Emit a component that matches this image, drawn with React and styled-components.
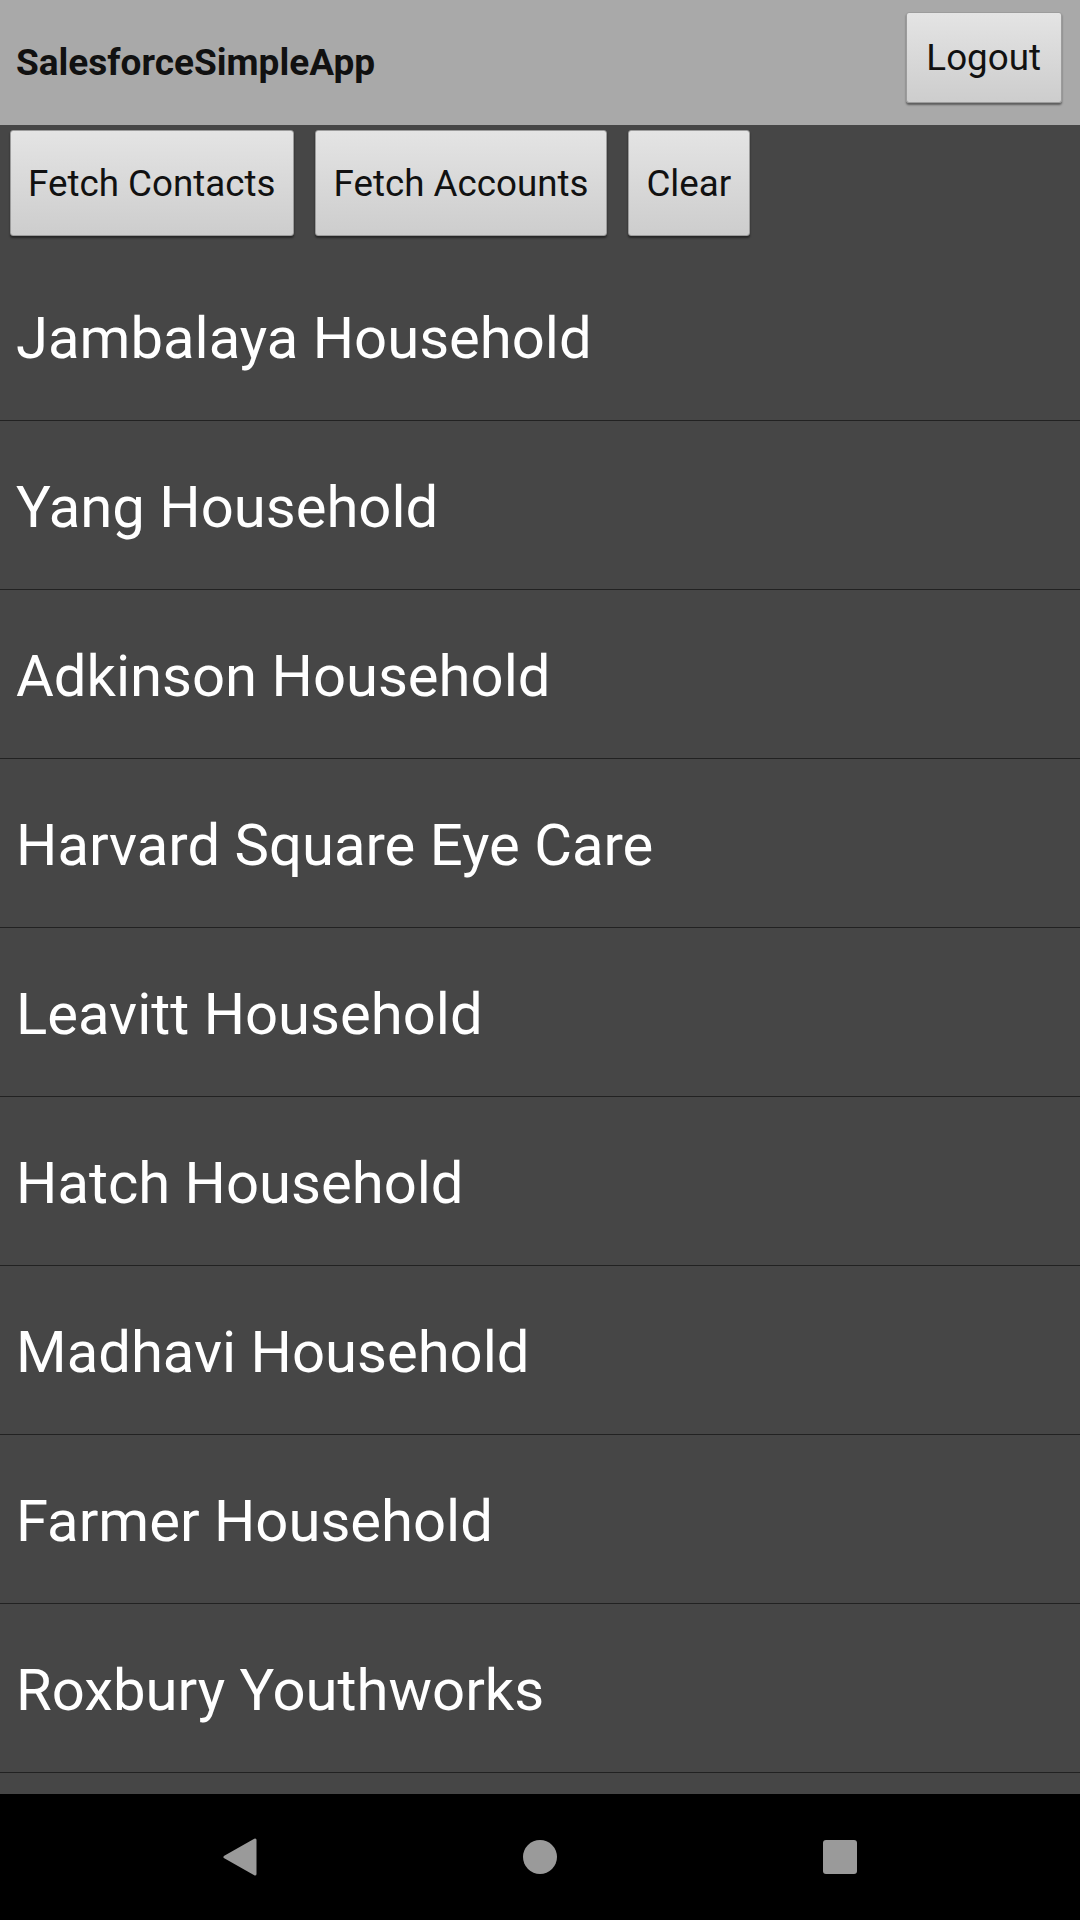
import React from "react"
import styled, { createGlobalStyle } from "styled-components"

const GlobalStyle = createGlobalStyle`
  html, body {
    margin: 0;
    padding: 0;
    background: #464646;
  }
  * {
    box-sizing: border-box;
  }
`

const Screen = styled.div`
  width: 1080px;
  height: 1920px;
  display: flex;
  flex-direction: column;
  background: #464646;
  font-family: Roboto, "Noto Sans", sans-serif;
  overflow: hidden;
`

const Header = styled.header`
  height: 125px;
  flex-shrink: 0;
  display: flex;
  align-items: center;
  justify-content: space-between;
  padding: 0 18px 0 16px;
  background: #a9a9a9;
`

const Title = styled.h1`
  margin: 0;
  font-size: 37px;
  font-weight: 700;
  color: #111;
`

const Button = styled.button`
  height: ${(p) => p.h || 106}px;
  padding: 0 ${(p) => p.pr || 18}px 0 ${(p) => p.pl || 17}px;
  font-family: Roboto, "Noto Sans", sans-serif;
  font-size: 36.75px;
  color: #111;
  background: linear-gradient(#e4e4e4, #cdcdcd);
  border: 1px solid #9c9c9c;
  border-radius: 3px;
  box-shadow: 0 2px 2px rgba(0, 0, 0, 0.45);
  cursor: pointer;
  white-space: nowrap;
`

const LogoutButton = styled(Button)`
  align-self: flex-start;
  margin-top: 12px;
`

const ButtonRow = styled.div`
  display: flex;
  gap: 21px;
  padding: 5px 0 16px 10px;
  flex-shrink: 0;
`

const List = styled.ul`
  flex: 1;
  margin: 0;
  padding: 0;
  list-style: none;
  overflow: hidden;
`

const Row = styled.li`
  height: 169px;
  flex-shrink: 0;
  display: flex;
  align-items: center;
  padding: 4px 0 0 16px;
  border-bottom: 1px solid #222;
  color: #fff;
  font-size: 58px;
`

const NavBar = styled.nav`
  height: 126px;
  flex-shrink: 0;
  display: flex;
  justify-content: center;
  align-items: center;
  background: #000;
`

const NavSlot = styled.div`
  width: 300px;
  display: flex;
  justify-content: center;
  align-items: center;
`

const accounts = [
  "Jambalaya Household",
  "Yang Household",
  "Adkinson Household",
  "Harvard Square Eye Care",
  "Leavitt Household",
  "Hatch Household",
  "Madhavi Household",
  "Farmer Household",
  "Roxbury Youthworks",
  "",
]

export default function App() {
  return (
    <Screen>
      <GlobalStyle />
      <Header>
        <Title>SalesforceSimpleApp</Title>
        <LogoutButton h={91} pl={19} pr={20}>Logout</LogoutButton>
      </Header>
      <ButtonRow>
        <Button>Fetch Contacts</Button>
        <Button>Fetch Accounts</Button>
        <Button>Clear</Button>
      </ButtonRow>
      <List>
        {accounts.map((name, i) => (
          <Row key={i}>{name}</Row>
        ))}
      </List>
      <NavBar>
        <NavSlot>
          <svg width="40" height="40" viewBox="0 0 40 40">
            <path
              d="M35 3 L35 37 L5 20 Z"
              fill="#9a9a9a"
              stroke="#9a9a9a"
              strokeWidth="3"
              strokeLinejoin="round"
            />
          </svg>
        </NavSlot>
        <NavSlot>
          <svg width="36" height="36" viewBox="0 0 36 36">
            <circle cx="18" cy="18" r="17" fill="#9a9a9a" />
          </svg>
        </NavSlot>
        <NavSlot>
          <svg width="36" height="36" viewBox="0 0 36 36">
            <rect x="1" y="1" width="34" height="34" rx="3" fill="#9a9a9a" />
          </svg>
        </NavSlot>
      </NavBar>
    </Screen>
  )
}
